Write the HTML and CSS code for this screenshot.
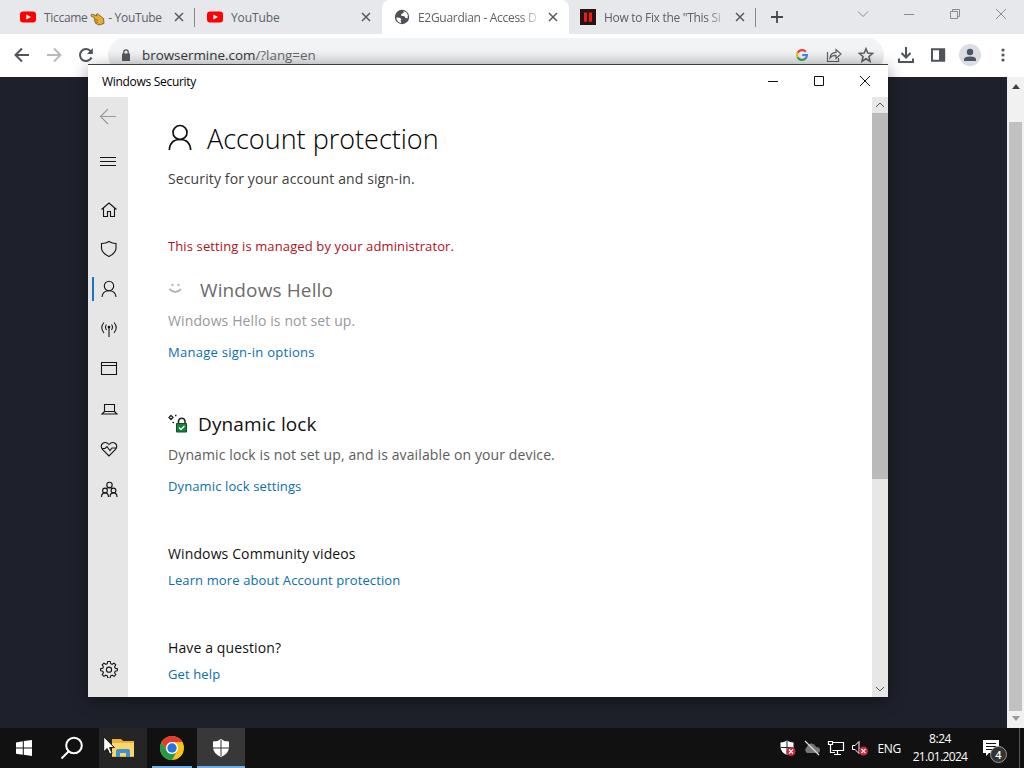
FILE: index.html
```html
<!DOCTYPE html>
<html lang="en">

<head>
  <meta charset="utf-8">
  <title>Windows Security</title>
  <link rel="stylesheet" href="styles.css">
</head>

<body>
  <div class="desktop">
    <header class="browser">
      <div class="tabs">
        <div class="tab">
          <svg class="favicon" viewBox="0 0 16 16"><rect y="2.5" width="16" height="11" rx="3" fill="#f00"/><path d="M6.3 5.4v5.2L11 8z" fill="#fff"/></svg>
          <span class="tab-title">Ticcame <svg class="hand" viewBox="0 0 15 15"><path d="M1 4.2Q1 3 2.3 3.3L7 4.8 6.4 3.2Q7.2 2 8.7 3.5L13.5 7.5 14 12.5 9 14 6 12.5Q4.4 11.5 5 10.4 3.8 9.5 4.7 8.2 4.1 7.6 4.6 6.8L1.7 5.5Q1 5 1 4.2z" fill="#e9ad34" stroke="#5b4418" stroke-width=".7"/><path d="M5 8.2l3 1.3M5.3 10.6l2.4 1" stroke="#80551a" stroke-width=".8"/></svg> - YouTube</span>
          <svg class="close" viewBox="0 0 10 10"><path d="M1 1l8 8M9 1l-8 8"/></svg>
        </div>
        <div class="tab">
          <svg class="favicon" viewBox="0 0 16 16"><rect y="2.5" width="16" height="11" rx="3" fill="#f00"/><path d="M6.3 5.4v5.2L11 8z" fill="#fff"/></svg>
          <span class="tab-title">YouTube</span>
          <svg class="close" viewBox="0 0 10 10"><path d="M1 1l8 8M9 1l-8 8"/></svg>
        </div>
        <div class="tab active">
          <svg class="favicon" viewBox="0 0 16 16"><circle cx="8" cy="8" r="7.2" fill="#4d5156"/><path d="M2.2 8.5l3.6.2 1.6 1.5-.8 1.5.8 2.500Q3 13.600 2.200 8.500zM9.500 2l.2 1.800L7.400 5 7 6.700l3.200.4 1.200 2 2.100.2.4-3Q13 3 9.500 2z" fill="#fff"/></svg>
          <span class="tab-title fade">E2Guardian - Access D</span>
          <svg class="close" viewBox="0 0 10 10"><path d="M1 1l8 8M9 1l-8 8"/></svg>
        </div>
        <div class="tab last">
          <svg class="favicon" viewBox="0 0 16 16"><path d="M0 0h16v16H0z" fill="#241414"/><path d="M4 3.500h3v9.200H4zM8.800 3.500H12v9.200H8.800z" fill="#e8200c"/></svg>
          <span class="tab-title fade">How to Fix the "This Si</span>
          <svg class="close" viewBox="0 0 10 10"><path d="M1 1l8 8M9 1l-8 8"/></svg>
        </div>
        <svg class="plus" viewBox="0 0 12 12"><path d="M6 0v12M0 6h12"/></svg>
        <div class="controls">
          <svg viewBox="0 0 12 12"><path d="M1 3.500l5 5 5-5"/></svg>
          <svg viewBox="0 0 12 12"><path d="M1 6.500h10"/></svg>
          <svg viewBox="0 0 12 12"><path d="M1.500 3.500h7v7h-7zM3.500 3.500v-2h7v7h-2"/></svg>
          <svg viewBox="0 0 12 12"><path d="M1 1l10 10M11 1L1 11"/></svg>
        </div>
      </div>
      <div class="toolbar">
        <div class="nav">
          <svg viewBox="0 0 16 16"><path d="M15 8H2M8 1.500L1.500 8 8 14.500"/></svg>
          <svg class="off" viewBox="0 0 16 16"><path d="M1 8h13M8 1.500L14.500 8 8 14.500"/></svg>
          <svg viewBox="0 0 16 16"><path d="M13.500 10.500A6 6 0 1 1 12.700 4.300L14 6"/><path d="M14.800 1v6H9z" fill="#50545a" stroke="none"/></svg>
        </div>
        <div class="omnibox">
          <svg class="padlock" viewBox="0 0 10 12"><path d="M1 4.500h8V12H1z" fill="#54585d"/><path d="M2.800 5V3a2.200 2.200 0 0 1 4.400 0v2" fill="none" stroke="#54585d" stroke-width="1.300"/></svg>
          <span class="url">browsermine.com<i>/?lang=en</i></span>
          <svg class="google" viewBox="0 0 12 12" fill="none" stroke-width="2.200"><path d="M9.800 2.800A5 5 0 0 0 1.600 3.800" stroke="#ea4335"/><path d="M1.700 3.600a5 5 0 0 0 0 4.800" stroke="#fbbc05"/><path d="M1.600 8.200a5 5 0 0 0 7.700 1.500" stroke="#34a853"/><path d="M9 10a5 5 0 0 0 1.900-4H6.200" stroke="#4285f4"/></svg>
          <svg class="share" viewBox="0 0 16 16"><path d="M1.500 5v9.500h11V11M4 11Q4.500 5.500 10 5.300V2.500L15 7l-5 4.500V8.300Q6 8.200 4 11z"/></svg>
          <svg class="star" viewBox="0 0 16 16"><path d="M8 1.800l1.800 4.300 4.700.4-3.500 3 1 4.700-4-2.500-4 2.500 1-4.700-3.500-3 4.700-.4z"/></svg>
        </div>
        <div class="tools">
          <svg viewBox="0 0 18 18"><path d="M9 1v10M4.500 7L9 11.500 13.500 7M2 12.500V16h14v-3.500"/></svg>
          <svg viewBox="0 0 18 18"><path d="M3 3.200h12.200v11.600H3z"/><path d="M10 3h5v12h-5z" fill="#50545a" stroke="none"/></svg>
          <svg class="avatar" viewBox="0 0 22 22"><circle cx="11" cy="11" r="11" fill="#dadde2"/><circle cx="11" cy="8" r="3.200" fill="#4b5563"/><path d="M5 17v-1.500Q5 12.500 11 12.500t6 3V17z" fill="#4b5563"/></svg>
          <svg class="dots" viewBox="0 0 18 18"><circle cx="9" cy="4" r="1.600"/><circle cx="9" cy="9" r="1.600"/><circle cx="9" cy="14" r="1.600"/></svg>
        </div>
      </div>
    </header>

    <main class="page">
      <div class="page-scroll">
        <svg viewBox="0 0 8 5"><path d="M0 5l4-5 4 5z" fill="#444"/></svg>
        <div class="page-thumb"></div>
        <svg viewBox="0 0 8 5"><path d="M0 0h8L4 5z" fill="#999"/></svg>
      </div>
    </main>

    <section class="window">
      <div class="titlebar">
        <span class="window-name">Windows Security</span>
        <div class="window-buttons">
          <svg viewBox="0 0 12 12"><path d="M1 6.500h10"/></svg>
          <svg viewBox="0 0 12 12"><path d="M1.500 1.500h9v9h-9z"/></svg>
          <svg viewBox="0 0 12 12"><path d="M1 1l10 10M11 1L1 11"/></svg>
        </div>
      </div>
      <div class="window-body">
        <nav class="side">
          <div class="side-item back"><svg viewBox="0 0 18 18"><path d="M17 8.500H1.500M9 1L1.500 8.500 9 16"/></svg></div>
          <div class="side-item menu"><svg viewBox="0 0 18 18"><path d="M1 5.500h16M1 9.500h16M1 13.500h16"/></svg></div>
          <div class="side-item"><svg viewBox="0 0 18 18"><path d="M1.500 9.500L9 3l7.500 6.500M3.500 8v8.500h4v-5h3v5h4V8"/></svg></div>
          <div class="side-item"><svg viewBox="0 0 18 18"><path d="M9 1.500Q12 3.500 16 3.500V8Q16 13 9 16.500 1.500 13 1.500 8V3.500Q6 3.500 9 1.500z"/></svg></div>
          <div class="side-item selected"><svg viewBox="0 0 18 18"><circle cx="9" cy="6" r="4.700"/><path d="M2 17Q2.500 10.700 9 10.700T16 17"/></svg></div>
          <div class="side-item"><svg viewBox="0 0 18 18"><path d="M9 7v10M6.500 4.500Q4.500 7 6.500 10M11.500 4.500Q13.500 7 11.500 10M4 2.500Q-.5 7.500 4 13M14 2.500Q18.500 7.500 14 13"/><circle cx="9" cy="7" r=".8" fill="#111"/></svg></div>
          <div class="side-item"><svg viewBox="0 0 18 18"><path d="M1.500 2.500h15v12h-15zM1.500 5.500h15"/></svg></div>
          <div class="side-item"><svg viewBox="0 0 18 18"><path d="M4.500 4.500h10v7h-10zM4.500 11.500l-2.500 2.500h15l-2.500-2.500"/></svg></div>
          <div class="side-item"><svg viewBox="0 0 18 18"><path d="M9 16L2.500 9.500Q0 6 2.500 3.500 6 1 9 4.500 12 1 15.500 3.500 18 6 15.500 9.500zM1.500 8.500H5l2-2 3 4 2-2.500h4.500"/></svg></div>
          <div class="side-item family"><svg viewBox="0 0 18 18"><circle cx="9.500" cy="4" r="2.700"/><circle cx="5" cy="9.500" r="2.400"/><circle cx="13.500" cy="9.500" r="2.400"/><path d="M1.500 16Q1.500 11.900 5 11.900T8.500 16M10 16Q10 11.900 13.500 11.900T17 16M6 7.500Q7.500 6.700 9.500 6.700t3 .8"/></svg></div>
          <div class="side-item gear"><svg viewBox="0 0 18 18"><path d="M7.800 1.500h2.400l.5 2.200 1.500.6 1.900-1.200 1.700 1.700-1.200 1.900.6 1.500 2.200.5v2l-2.200.6-.6 1.500 1.200 1.900-1.700 1.700-1.900-1.200-1.500.6-.5 2.200H7.800l-.5-2.200-1.500-.6-1.900 1.200-1.700-1.700 1.200-1.900-.6-1.500-2.200-.6v-2l2.200-.5.6-1.500-1.200-1.900 1.700-1.700 1.900 1.200 1.500-.6z"/><circle cx="9" cy="9.700" r="2.600"/></svg></div>
        </nav>
        <div class="content">
          <h1><svg viewBox="0 0 24 28"><circle cx="12" cy="8.500" r="7"/><path d="M1.300 26Q2 15.500 12 15.500T22.700 26"/></svg><span>Account protection</span></h1>
          <p class="intro">Security for your account and sign-in.</p>
          <p class="managed">This setting is managed by your administrator.</p>
          <h2 class="disabled"><svg viewBox="0 0 20 20"><path d="M1.500 9Q7.500 15 13 9" stroke="#b5b5b5" stroke-width="2"/><circle cx="4.500" cy="5" r="1.200" fill="#bbb"/><circle cx="10.500" cy="5" r="1.200" fill="#bbb"/></svg><span>Windows Hello</span></h2>
          <p class="status disabled">Windows Hello is not set up.</p>
          <a class="manage">Manage sign-in options</a>
          <h2 class="lock"><svg viewBox="0 0 20 20"><path d="M10.500 10V7a3.300 3.300 0 0 1 6.500 0v3" stroke="#222" stroke-width="1.500"/><path d="M8.500 9.500h10V18h-10z" fill="#13823a" stroke="#114d25"/><path d="M11 13.500l2 2 3.500-3.500" stroke="#fff" stroke-width="1.300"/><path d="M3 1.500L5 3.500l-2 2-2-2zM7 1.500h1.500M4.500 8l1.500 1" stroke="#222" stroke-width="1.300"/></svg><span>Dynamic lock</span></h2>
          <p class="status">Dynamic lock is not set up, and is available on your device.</p>
          <a>Dynamic lock settings</a>
          <h3>Windows Community videos</h3>
          <a>Learn more about Account protection</a>
          <h3>Have a question?</h3>
          <a>Get help</a>
        </div>
        <div class="scroll">
          <div class="arrow"><svg viewBox="0 0 10 6"><path d="M1 5l4-4 4 4"/></svg></div>
          <div class="thumb"></div>
          <div class="arrow"><svg viewBox="0 0 10 6"><path d="M1 1l4 4 4-4"/></svg></div>
        </div>
      </div>
    </section>

    <footer class="taskbar">
      <div class="task"><svg viewBox="0 0 18 18" fill="#fff"><path d="M1 3.400L7.800 2.300v6.200H1zM8.800 2.100L17 1v7.500H8.800zM1 9.500h6.800v6.200L1 14.700zM8.800 9.500H17V17l-8.200-1.200z"/></svg></div>
      <div class="task"><svg class="search" viewBox="0 0 24 24"><circle cx="14" cy="9.500" r="7.800"/><path d="M8.500 15.500L1.500 22.500"/></svg></div>
      <div class="task hover"><svg class="folder" viewBox="0 0 24 22"><path d="M1 2h9l2 2h11v16H1z" fill="#e8b33f"/><path d="M1 6h22v13H1z" fill="#fbd769"/><path d="M5 20v-6q0-2 2-2h10q2 0 2 2v6h-4v-4H9v4z" fill="#3f91d2"/></svg></div>
      <div class="task open"><svg class="chrome" viewBox="0 0 24 24"><circle cx="12" cy="12" r="12" fill="#fbc318"/><path d="M1.600 6A12 12 0 0 1 22.400 6H12a6 6 0 0 0-5.200 9z" fill="#e33b2e"/><path d="M1.600 6A12 12 0 0 0 12 24l5.200-9A6 6 0 0 1 6.800 15z" fill="#269a48"/><circle cx="12" cy="12" r="6" fill="#fff"/><circle cx="12" cy="12" r="4.700" fill="#2573e8"/></svg></div>
      <div class="task open current"><svg viewBox="0 0 18 18"><path d="M9 0Q12 2.500 17 2.500V8Q17 14.500 9 18 1 14.500 1 8V2.500Q6 2.500 9 0z" fill="#fff"/><path d="M9 1v16M1 9h16" stroke="#333"/></svg></div>
      <div class="tray">
        <svg viewBox="0 0 18 18"><path d="M8 1.500Q11 3.500 14.500 3.500V8Q14.500 13 8 16 1.500 13 1.500 8V3.500Q5 3.500 8 1.500z" fill="#fff"/><path d="M8 2v14M2 8.500h12" stroke="#222"/><circle cx="12" cy="12.500" r="4.500" fill="#cf2638"/><path d="M10 10.500l4 4M14 10.500l-4 4" stroke="#fff" stroke-width="1.200"/></svg>
        <svg viewBox="0 0 18 18"><path d="M4 14a3.500 3.500 0 0 1 0-6Q5 4 9 4.500q3 .5 4 3.500 4 0 4 3t-3 3z" fill="#777"/><path d="M2 2l14 14" stroke="#ddd" stroke-width="1.300"/></svg>
        <svg viewBox="0 0 18 18" fill="none" stroke="#fff" stroke-width="1.200"><path d="M5.500 3.500h11v8h-11M10.500 12v3.500M7 15.500h7M1.500 2.500h4v3h-4zM3.500 6v7.500H8"/></svg>
        <svg viewBox="0 0 18 18"><path d="M1.500 6.500H4l4-4v12l-4-4H1.500z" fill="none" stroke="#fff"/><circle cx="12.500" cy="12" r="4.500" fill="#cf2638"/><path d="M10.500 10l4 4M14.500 10l-4 4" stroke="#fff" stroke-width="1.200"/></svg>
        <span class="lang">ENG</span>
        <div class="clock"><div>8:24</div><div class="date">21.01.2024</div></div>
        <div class="notices">
          <svg viewBox="0 0 18 18"><path d="M1 1h16v13H7l-3 3v-3H1z" fill="#fff"/><path d="M4 4.500h10M4 7.500h10M4 10.500h7" stroke="#111" stroke-width="1.200"/></svg>
          <span class="count">4</span>
        </div>
        <div class="peek"></div>
      </div>
    </footer>

    <svg class="cursor" viewBox="0 0 12 19"><path d="M.7.800v15l3.500-3.300 2.500 5.700 2.400-1-2.500-5.600h4.800z" fill="#fff" stroke="#111"/></svg>
  </div>
</body>

</html>
```
FILE: styles.css
```css
* {
  box-sizing: border-box;
}

body {
  margin: 0;
  font-family: "Open Sans", "Noto Sans", sans-serif;
  font-size: 14px;
}

h1,
h2,
h3,
p {
  margin: 0;
  font-weight: normal;
}

svg {
  display: block;
  flex: none;
}

.desktop {
  position: relative;
  width: 1024px;
  height: 768px;
  overflow: hidden;
  display: flex;
  flex-direction: column;
  background: #1e212b;
}

/* browser */
.browser {
  height: 77px;
  background: #fff;
}

.tabs {
  display: flex;
  align-items: center;
  height: 34px;
  padding-left: 8px;
  background: #e7e8ec;
}

.tab {
  display: flex;
  align-items: center;
  width: 187px;
  height: 34px;
  padding: 0 11px 0 12px;
}

.tab:first-child,
.tab.last {
  background: linear-gradient(#85888d, #85888d) right 8px / 1px 19px no-repeat;
}

.tab.active {
  background: #fff;
  border-radius: 8px 8px 0 0;
}

.tab.last {
  padding-left: 11px;
}

.favicon {
  width: 16px;
  height: 16px;
  margin-right: 8px;
}

.tab-title {
  flex: 1;
  white-space: nowrap;
  font-size: 12px;
  letter-spacing: -.3px;
  color: #5d6064;
}

.tab:nth-child(2) .tab-title {
  letter-spacing: -.1px;
}

.fade {
  -webkit-mask-image: linear-gradient(90deg, #000 82%, transparent);
  mask-image: linear-gradient(90deg, #000 82%, transparent);
}

.hand {
  display: inline-block;
  width: 15px;
  height: 15px;
  vertical-align: -4px;
}

.close {
  width: 10px;
  height: 10px;
  margin-left: 6px;
  fill: none;
  stroke: #55595e;
  stroke-width: 1.5;
}

.plus {
  width: 12px;
  height: 12px;
  margin-left: 15px;
  stroke: #45484d;
  stroke-width: 1.8;
}

.controls {
  display: flex;
  gap: 34px;
  margin: -6px 17px 0 auto;
}

.controls svg {
  width: 12px;
  height: 12px;
  fill: none;
  stroke: #888b90;
}

.toolbar {
  display: flex;
  align-items: center;
  height: 43px;
  padding: 0 0 1px 14px;
}

.nav {
  display: flex;
  gap: 16px;
}

.nav svg,
.tools svg {
  width: 16px;
  height: 16px;
  fill: none;
  stroke: #50545a;
  stroke-width: 2;
}

.nav .off {
  stroke: #b7b9bc;
}

.omnibox {
  display: flex;
  align-items: center;
  width: 776px;
  height: 34px;
  margin-left: 14px;
  padding: 0 10px 0 13px;
  border-radius: 17px;
  background: linear-gradient(#f1f3f4 35%, #d8dadd);
}

.padlock {
  width: 10px;
  height: 12px;
}

.url {
  flex: 1;
  margin-left: 11px;
  font-size: 13.4px;
  color: #33363a;
}

.url i {
  font-style: normal;
  color: #64686d;
}

.google {
  width: 12px;
  height: 12px;
}

.share,
.star {
  width: 16px;
  height: 16px;
  margin-left: 18px;
  fill: none;
  stroke: #5c6065;
  stroke-width: 1.2;
}

.star {
  margin-left: 16px;
  stroke-width: 1.6;
}

.tools {
  display: flex;
  align-items: center;
  margin-left: 13px;
  gap: 14px;
}

.tools svg {
  width: 18px;
  height: 18px;
}

.tools .avatar {
  width: 22px;
  height: 22px;
  margin: 0 -1px 0 -2px;
  stroke: none;
}

.tools .dots {
  fill: #50545a;
  stroke: none;
}

.page {
  flex: 1;
  display: flex;
  justify-content: flex-end;
}

.page-scroll {
  display: flex;
  flex-direction: column;
  align-items: center;
  width: 17px;
  padding: 7px 0;
  background: #f1f1f1;
}

.page-scroll svg {
  width: 8px;
  height: 5px;
}

.page-thumb {
  width: 13px;
  height: 589px;
  margin: 33px 0 5px;
  background: #c1c1c1;
}

/* security window */
.window {
  position: absolute;
  left: 88px;
  top: 64px;
  width: 800px;
  height: 633px;
  border-top: 1px solid #3c3e40;
  background: #fff;
  box-shadow: 0 4px 16px rgba(0, 0, 0, .4);
}

.titlebar {
  display: flex;
  justify-content: space-between;
  align-items: center;
  height: 32px;
  padding: 0 17px 0 14px;
}

.window-name {
  font-size: 12px;
  letter-spacing: -.3px;
}

.window-buttons {
  display: flex;
  gap: 34px;
}

.window-buttons svg {
  width: 12px;
  height: 12px;
  fill: none;
  stroke: #111;
}

.window-body {
  display: flex;
  height: 600px;
}

.side {
  display: flex;
  flex-direction: column;
  width: 40px;
  background: #e6e6e6;
}

.side-item {
  display: flex;
  align-items: center;
  justify-content: center;
  height: 40px;
  padding-left: 2px;
}

.side-item svg {
  width: 18px;
  height: 18px;
  fill: none;
  stroke: #151515;
  stroke-width: 1.1;
}

.side .back,
.side .menu {
  padding: 0;
}

.side .back svg {
  stroke: #999;
}

.side .menu {
  height: 48px;
  margin-bottom: 4px;
}

.side .selected {
  background: linear-gradient(#1a75c0, #1a75c0) 4px 8px / 2px 24px no-repeat;
}

.side .family {
  margin-top: 1px;
}

.side .gear {
  margin: auto 0 8px;
}

.content {
  flex: 1;
  padding: 23px 0 0 40px;
  letter-spacing: .12px;
}

.content h1 {
  display: flex;
  align-items: center;
  height: 36px;
  font-size: 27px;
  font-weight: 300;
  letter-spacing: 0;
  color: #000;
}

.content h1 svg {
  width: 24px;
  height: 28px;
  margin-right: 15px;
  fill: none;
  stroke: #111;
  stroke-width: 1.7;
}

.content p,
.content a,
.content h3 {
  display: block;
  height: 20px;
  line-height: 20px;
  white-space: nowrap;
}

.content .intro {
  margin-top: 13px;
  color: #404040;
}

.content .managed {
  margin-top: 47px;
  font-size: 13px;
  color: #b01020;
}

.content h2 {
  display: flex;
  align-items: center;
  height: 28px;
  margin-top: 20px;
  font-size: 19px;
  color: #111;
}

.content h2 svg {
  width: 20px;
  height: 20px;
  margin-right: 12px;
  fill: none;
}

.content h2.disabled {
  color: #6c6c6c;
}

.content h2.lock {
  margin-top: 48px;
}

.content h2.lock svg {
  margin-right: 10px;
}

.content .status {
  margin-top: 7px;
  color: #5c5c5c;
}

.content .status.disabled {
  color: #999;
}

.content a {
  margin-top: 11px;
  font-size: 13px;
  color: #0a6eb0;
}

.content .manage {
  letter-spacing: .27px;
}

.content h3 {
  margin-top: 48px;
  font-size: 14px;
  color: #111;
}

.content h3 + a {
  margin-top: 6px;
}

.scroll {
  width: 16px;
  background: #e7e7e7;
}

.arrow {
  display: flex;
  align-items: center;
  justify-content: center;
  height: 16px;
}

.arrow svg {
  width: 10px;
  height: 6px;
  fill: none;
  stroke: #555;
}

.thumb {
  height: 366px;
  margin-bottom: 202px;
  background: #bababa;
}

/* taskbar */
.taskbar {
  display: flex;
  height: 40px;
  background: #111;
  color: #fff;
}

.task {
  display: flex;
  align-items: center;
  justify-content: center;
  width: 48px;
  height: 40px;
}

.task svg {
  width: 18px;
  height: 18px;
}

.task .search {
  width: 24px;
  height: 24px;
  fill: none;
  stroke: #fff;
  stroke-width: 2;
}

.task .folder {
  width: 24px;
  height: 22px;
}

.task .chrome {
  width: 24px;
  height: 24px;
}

.hover {
  margin-left: 3px;
  background: #252525;
}

.open {
  margin-left: 1px;
  background: linear-gradient(#70b0e4, #70b0e4) center bottom / 40px 2px no-repeat;
}

.current {
  background: linear-gradient(#70b0e4, #70b0e4) center bottom / 48px 2px no-repeat #383838;
}

.tray {
  display: flex;
  align-items: center;
  margin-left: auto;
  font-size: 12px;
}

.tray svg {
  width: 18px;
  height: 18px;
  margin-right: 6px;
}

.lang {
  margin-left: 2px;
  letter-spacing: -.3px;
}

.clock {
  width: 56px;
  margin: 0 14px 0 11px;
  line-height: 18px;
  text-align: center;
}

.date {
  letter-spacing: -.65px;
  white-space: nowrap;
}

.clock div:first-child {
  letter-spacing: -.4px;
}

.notices {
  position: relative;
  width: 28px;
}

.count {
  position: absolute;
  left: 8px;
  top: 7px;
  width: 17px;
  height: 17px;
  border: 1px solid #999;
  border-radius: 50%;
  background: #333;
  font-size: 11px;
  font-weight: 600;
  line-height: 15px;
  text-align: center;
}

.peek {
  width: 5px;
  height: 40px;
  margin-left: 9px;
  border-left: 1px solid #555;
}

.cursor {
  position: absolute;
  left: 103px;
  top: 736px;
  width: 12px;
  height: 19px;
}
```
